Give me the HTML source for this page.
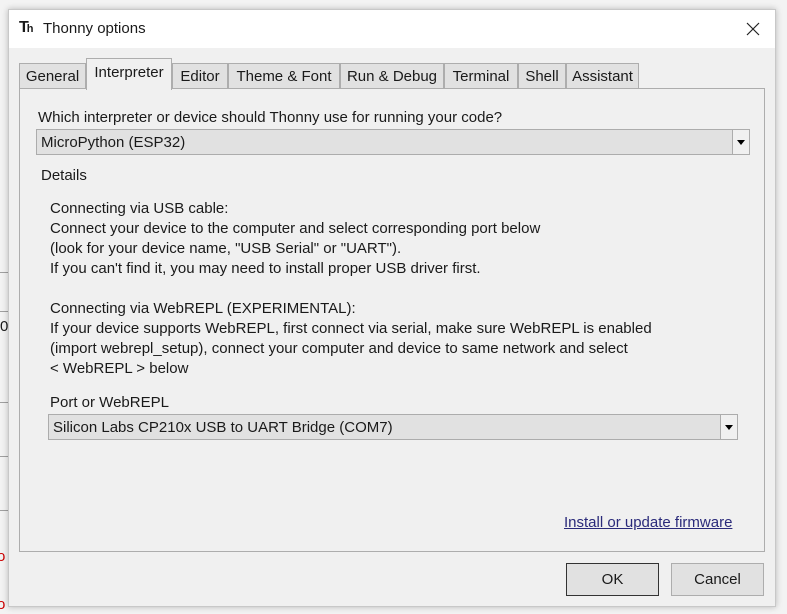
<!DOCTYPE html>
<html><head><meta charset="utf-8"><style>
*{margin:0;padding:0;box-sizing:border-box}
body{width:787px;height:614px;overflow:hidden;background:#f3f3f3;font-family:"Liberation Sans",sans-serif;font-size:15px;color:#1a1a1a;position:relative}
.a{position:absolute;white-space:nowrap}
.line{position:absolute;left:0;width:8px;height:1px;background:#a0a0a0}
#dlg{position:absolute;left:8px;top:9px;width:768px;height:598px;background:#f0f0f0;border:1px solid #c8c8c8;box-shadow:0 0 6px rgba(0,0,0,.25)}
#title{position:absolute;left:0;top:0;width:100%;height:38px;background:#fff}
.tab{position:absolute;top:53px;height:26px;background:#e1e1e1;border:1px solid #adadad;border-bottom:none;text-align:center;line-height:25px}
.sel{top:48px;height:32px;background:#f0f0f0;line-height:28px;z-index:2}
#panel{position:absolute;left:10px;top:78px;width:746px;height:464px;border:1px solid #adadad;background:#f0f0f0}
.cb{position:absolute;height:26px;background:#e1e1e1;border:1px solid #acacac;padding-left:4px;line-height:25px}
.arr{position:absolute;right:0;top:0;width:17px;height:24px;border-left:1px solid #acacac;background:#f0f0f0}
.arr:after{content:"";position:absolute;left:4px;top:10px;border:4px solid transparent;border-top:5px solid #000;border-bottom:none}
.btn{position:absolute;top:553px;height:33px;background:#e1e1e1;border:1px solid #adadad;text-align:center;line-height:32px}
</style></head><body>
<div class="line" style="top:272px"></div>
<div class="line" style="top:311px"></div>
<div class="line" style="top:402px"></div>
<div class="line" style="top:456px"></div>
<div class="line" style="top:510px"></div>
<div class="a" style="left:0;top:318px">0</div>
<div class="a" style="left:-3px;top:548px;color:#c00">o</div>
<div class="a" style="left:-3px;top:596px;color:#c00">o</div>
<div id="dlg">
 <div id="title">
  <div class="a" style="left:10px;top:9px;font-weight:bold;font-size:16px;letter-spacing:-2px">T<span style="font-size:11px">h</span></div>
  <div class="a" style="left:34px;top:10px;font-size:15px">Thonny options</div>
  <svg class="a" style="left:737px;top:12px" width="14" height="14"><path d="M1 1L13 13M13 1L1 13" stroke="#222" stroke-width="1.2"/></svg>
 </div>
 <div class="tab" style="left:10px;width:67px">General</div>
 <div class="tab sel" style="left:77px;width:86px">Interpreter</div>
 <div class="tab" style="left:163px;width:56px">Editor</div>
 <div class="tab" style="left:219px;width:112px">Theme &amp; Font</div>
 <div class="tab" style="left:331px;width:104px">Run &amp; Debug</div>
 <div class="tab" style="left:435px;width:74px">Terminal</div>
 <div class="tab" style="left:509px;width:48px">Shell</div>
 <div class="tab" style="left:557px;width:73px">Assistant</div>
 <div id="panel">
  <div class="a" style="left:18px;top:20px">Which interpreter or device should Thonny use for running your code?</div>
  <div class="cb" style="left:16px;top:40px;width:714px">MicroPython (ESP32)<div class="arr"></div></div>
  <div class="a" style="left:21px;top:78px">Details</div>
  <div class="a" style="left:30px;top:110px;line-height:20px">Connecting via USB cable:<br>Connect your device to the computer and select corresponding port below<br>(look for your device name, "USB Serial" or "UART").<br>If you can't find it, you may need to install proper USB driver first.<br><br>Connecting via WebREPL (EXPERIMENTAL):<br>If your device supports WebREPL, first connect via serial, make sure WebREPL is enabled<br>(import webrepl_setup), connect your computer and device to same network and select<br>&lt; WebREPL &gt; below</div>
  <div class="a" style="left:30px;top:305px">Port or WebREPL</div>
  <div class="cb" style="left:28px;top:325px;width:690px">Silicon Labs CP210x USB to UART Bridge (COM7)<div class="arr"></div></div>
  <div class="a" style="left:544px;top:425px;color:#2a2a7a;text-decoration:underline">Install or update firmware</div>
 </div>
 <div class="btn" style="left:557px;width:93px;border:1px solid #333">OK</div>
 <div class="btn" style="left:662px;width:93px">Cancel</div>
</div>
</body></html>
